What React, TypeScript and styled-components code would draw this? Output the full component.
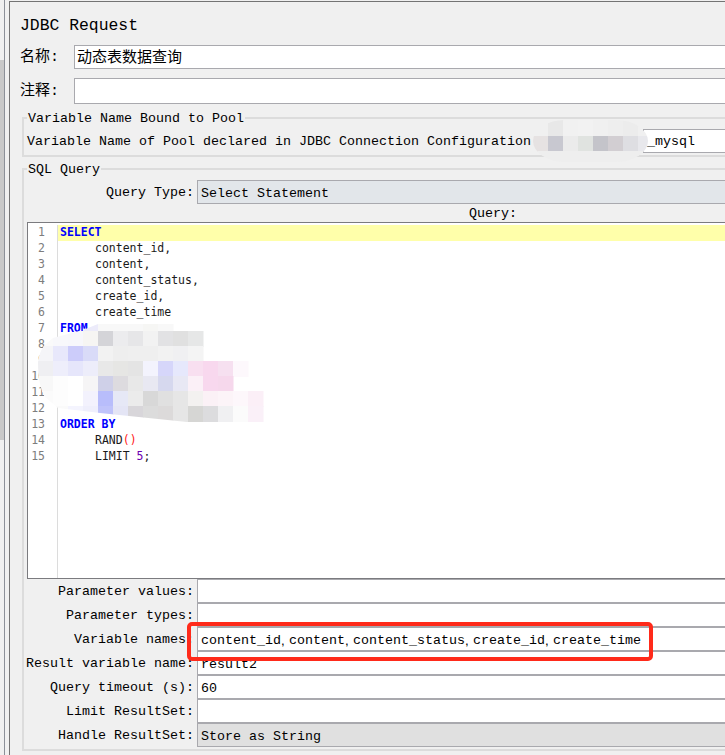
import styled, { createGlobalStyle } from 'styled-components';

const GlobalStyle = createGlobalStyle`
	html, body {
		margin: 0;
		padding: 0;
		background: #f0f0f0;
	}
`;

const Screen = styled.div`
	position: relative;
	display: flex;
	width: 725px;
	height: 755px;
	overflow: hidden;
	background: #f0f0f0;
	color: #000;
	font-family: 'Liberation Mono', 'Noto Sans CJK SC', monospace;
	font-size: 13.33px;
`;

const TreeEdge = styled.div`
	flex: none;
	width: 4px;
	padding: 60px 0 315px;
	box-sizing: border-box;
`;

const TreeThumb = styled.div`
	height: 100%;
	background: #c9c9c9;
`;

const Divider = styled.div`
	flex: none;
	width: 5px;
	border-left: 1px solid #8c9098;
	box-sizing: border-box;
`;

const Panel = styled.div`
	flex: none;
	width: 790px;
	margin-top: 1px;
	padding: 0 0 0 10px;
	box-sizing: border-box;
	border-left: 1px solid #747474;
	border-top: 1px solid #747474;
`;

const Title = styled.h1`
	margin: 0;
	height: 43px;
	padding-top: 14px;
	box-sizing: border-box;
	font-family: 'Liberation Mono', monospace;
	font-size: 16.4px;
	font-weight: 400;
	line-height: 20px;
`;

const NameRow = styled.div<{ $height: number; $gap: number }>`
	display: flex;
	align-items: center;
	height: ${(p) => p.$height}px;
	margin-bottom: ${(p) => p.$gap}px;
`;

const NameLabel = styled.div`
	flex: none;
	width: 54px;
	padding-top: 2px;
	box-sizing: border-box;
	font-family: 'Liberation Mono', 'Noto Sans CJK SC', monospace;
	font-size: 15px;
	line-height: 20px;
`;

const Field = styled.div<{ $bg?: string }>`
	flex: 1;
	display: flex;
	align-items: center;
	height: 100%;
	min-width: 0;
	padding-left: 3px;
	box-sizing: border-box;
	background: ${(p) => p.$bg ?? '#fff'};
	border: 1px solid #a9a9ae;
	border-right: 0;
	white-space: pre;
`;

const RowField = styled(Field)`
	padding-top: 2px;
`;

const CnValue = styled.span`
	margin-left: -1px;
	padding-bottom: 3px;
	font-family: 'Noto Sans CJK SC', sans-serif;
	font-size: 15px;
`;

const Group = styled.fieldset<{ $height: number; $gap: number }>`
	position: relative;
	height: ${(p) => p.$height}px;
	margin: 0 0 ${(p) => p.$gap}px 2px;
	padding: 0 0 0 3px;
	box-sizing: border-box;
	border: 0;
	border-top: 2px solid #dcdcdc;
	border-left: 2px solid #dcdcdc;
	border-bottom: 2px solid #dcdcdc;
	min-width: 0;
`;

const GroupLegend = styled.div`
	position: absolute;
	top: -8px;
	left: 3px;
	padding: 0 1px;
	background: #f0f0f0;
	line-height: 16px;
`;

const PoolRow = styled.div`
	display: flex;
	align-items: center;
	height: 24px;
	margin-top: 10px;
`;

const PoolLabel = styled.div`
	flex: none;
	width: 616px;
`;

const FormRow = styled.div<{ $first?: boolean }>`
	display: flex;
	align-items: stretch;
	height: 24px;
	margin-top: ${(p) => (p.$first ? 10 : 0)}px;
`;

const RowLabel = styled.div`
	flex: none;
	display: flex;
	justify-content: flex-end;
	width: 170px;
	padding: 1px 3px 0 0;
	box-sizing: border-box;
	white-space: pre;
	line-height: 24px;
`;

const QueryHeading = styled.div`
	height: 18px;
	padding-left: 442px;
	line-height: 20px;
`;

const Editor = styled.div`
	display: flex;
	height: 357px;
	padding-top: 2px;
	box-sizing: border-box;
	background: #fff;
	border: 1px solid #7b7b7f;
	border-right: 0;
	font-family: 'DejaVu Sans Mono', monospace;
	font-size: 11.5px;
	line-height: 15px;
`;

const Gutter = styled.div`
	flex: none;
	width: 30px;
	padding-right: 12px;
	box-sizing: border-box;
	text-align: right;
	color: #7d7d7d;
	border-right: 1px solid #dcdcdc;
`;

const GutterLine = styled.div`
	height: 16px;
`;

const Code = styled.div`
	flex: 1;
	min-width: 0;
`;

const CodeLine = styled.div<{ $active?: boolean; $indent?: boolean }>`
	height: 16px;
	padding-left: ${(p) => (p.$indent ? 37 : 2)}px;
	background: ${(p) => (p.$active ? '#ffffaa' : 'transparent')};
	white-space: pre;
	color: #1a1a1a;
`;

const Keyword = styled.span`
	color: #0000ff;
	font-weight: 700;
`;

const Paren = styled.span`
	color: #ff2020;
`;

const NumberToken = styled.span`
	color: #6a00b0;
`;

// comma and the following space are narrower than the mono text around them
const Sep = styled.span`
	font-family: 'Liberation Sans', sans-serif;
	letter-spacing: 0.3px;
`;

const Highlight = styled.div`
	position: absolute;
	left: 187px;
	top: 622px;
	width: 466px;
	height: 39px;
	box-sizing: border-box;
	border: 4px solid #ff2a1a;
	border-radius: 5px;
`;

const Mosaic = styled.svg<{ $left: number; $top: number }>`
	position: absolute;
	left: ${(p) => p.$left}px;
	top: ${(p) => p.$top}px;
`;

const codeBlurRows: [number, number, string[]][] = [
	[316, 83, ['#ecebfa', '#f8f8f8', '#f8f8f8', '#f8f8f8', '#f6f6f4', '#f8f8f8']],
	[331, 38, ['#fafafa', '#f8f8fb', '#f7f7fb', '#f6f5f3', '#d4d4d8', '#ececee', '#e6e6e8', '#f2f2f2', '#e2e2e4', '#e0e0e0', '#e6e7e7']],
	[346, 38, ['#f5f5f8', '#e8e8fb', '#ccccfa', '#d9dbf8', '#f2f2f2', '#eeeeee', '#efefef', '#efefef', '#f2f2f2', '#f0f0f2', '#f4f4f4']],
	[361, 38, ['#efeff2', '#eeeefb', '#e6e6fb', '#ededfa', '#e8e8e8', '#e6e6e4', '#e4e4e4', '#f3f3fd', '#d6d6fa', '#e6e8fc', '#f8dff0', '#f8d8ee', '#f6e0f0', '#fdf8fc']],
	[376, 38, ['#f8f8f8', '#fdfdfd', '#ffffff', '#f6f5f6', '#cfd0e8', '#dddbdf', '#e8e8e8', '#e8e8f2', '#d6d8ee', '#e8e8f4', '#fbf0f7', '#f8d8ee', '#f6d8ec']],
	[391, 38, ['#fbfbfb', '#fdfdfd', '#ffffff', '#f3f2fd', '#b8bdfb', '#e6e8f6', '#ebebeb', '#d8d8d8', '#e0e0e0', '#e6e6e6', '#f3f1f0', '#fbf1f6', '#fcf4f8', '#fdf7fb', '#fbeff7']],
	[406, 53, ['#fafafa', '#f4f4fe', '#efeffc', '#bfc3fa', '#e4e5f5', '#d8d6da', '#dcdcdc', '#dcdada', '#e6e6e6', '#d6d6d4', '#dcdcde', '#f0f0f2', '#fbfbfb', '#faf0f8']],
];

const poolBlurRows: [number, number, string[]][] = [
	[120, 533, ['#f0f0f0', '#e8e8e8', '#f1f1f1', '#f2f2f2', '#f0f0f0', '#eeeeee', '#ececec', '#f0f0f0']],
	[136, 533, ['#e6e2e2', '#c8c8d0', '#ebebeb', '#e0e3e0', '#c4c4ca', '#d2ced2', '#dedee2', '#e8e8ec']],
	[151, 533, ['#eeeeee', '#eeeeee', '#eeeeee', '#eeeeee', '#eeeeee', '#eeeeee', '#eeeeee', '#eeeeee']],
];

const BlurCells = ({
	rows,
	originX,
	originY,
}: {
	rows: [number, number, string[]][];
	originX: number;
	originY: number;
}) => (
	<>
		{rows.flatMap(([y, x, colors]) =>
			colors.map((c, i) => (
				<rect key={`${y}-${i}`} x={x - originX + i * 15} y={y - originY} width={15.5} height={16} fill={c} />
			)),
		)}
	</>
);

const lineNumbers = Array.from({ length: 15 }, (_, i) => i + 1);

const App = () => {
	return (
		<Screen>
			<GlobalStyle />
			<TreeEdge>
				<TreeThumb />
			</TreeEdge>
			<Divider />
			<Panel>
				<Title>JDBC Request</Title>
				<NameRow $height={24} $gap={9}>
					<NameLabel>名称:</NameLabel>
					<Field>
						<CnValue>动态表数据查询</CnValue>
					</Field>
				</NameRow>
				<NameRow $height={26} $gap={13}>
					<NameLabel>注释:</NameLabel>
					<Field />
				</NameRow>
				<Group $height={40} $gap={11}>
					<GroupLegend>Variable Name Bound to Pool</GroupLegend>
					<PoolRow>
						<PoolLabel>Variable Name of Pool declared in JDBC Connection Configuration</PoolLabel>
						<Field>_mysql</Field>
					</PoolRow>
				</Group>
				<Group $height={583} $gap={0}>
					<GroupLegend>SQL Query</GroupLegend>
					<FormRow $first>
						<RowLabel>Query Type:</RowLabel>
						<RowField $bg="#e2e6ea">Select Statement</RowField>
					</FormRow>
					<QueryHeading>Query:</QueryHeading>
					<Editor>
						<Gutter>
							{lineNumbers.map((n) => (
								<GutterLine key={n}>{n}</GutterLine>
							))}
						</Gutter>
						<Code>
							<CodeLine $active>
								<Keyword>SELECT</Keyword>
							</CodeLine>
							<CodeLine $indent>content_id,</CodeLine>
							<CodeLine $indent>content,</CodeLine>
							<CodeLine $indent>content_status,</CodeLine>
							<CodeLine $indent>create_id,</CodeLine>
							<CodeLine $indent>create_time</CodeLine>
							<CodeLine>
								<Keyword>FROM</Keyword>
							</CodeLine>
							<CodeLine />
							<CodeLine />
							<CodeLine />
							<CodeLine />
							<CodeLine />
							<CodeLine>
								<Keyword>ORDER BY</Keyword>
							</CodeLine>
							<CodeLine $indent>
								RAND<Paren>()</Paren>
							</CodeLine>
							<CodeLine $indent>
								LIMIT <NumberToken>5</NumberToken>;
							</CodeLine>
						</Code>
					</Editor>
					<FormRow>
						<RowLabel>Parameter values:</RowLabel>
						<RowField />
					</FormRow>
					<FormRow>
						<RowLabel>Parameter types:</RowLabel>
						<RowField />
					</FormRow>
					<FormRow>
						<RowLabel>Variable names:</RowLabel>
						<RowField>
							content_id<Sep>, </Sep>content<Sep>, </Sep>content_status<Sep>, </Sep>create_id<Sep>, </Sep>create_time
						</RowField>
					</FormRow>
					<FormRow>
						<RowLabel>Result variable name:</RowLabel>
						<RowField>result2</RowField>
					</FormRow>
					<FormRow>
						<RowLabel>Query timeout (s):</RowLabel>
						<RowField>60</RowField>
					</FormRow>
					<FormRow>
						<RowLabel>Limit ResultSet:</RowLabel>
						<RowField />
					</FormRow>
					<FormRow>
						<RowLabel>Handle ResultSet:</RowLabel>
						<RowField $bg="#e0e0e0">Store as String</RowField>
					</FormRow>
				</Group>
			</Panel>
			<Mosaic $left={533} $top={120} width={120} height={42}>
				<defs>
					<clipPath id="pool-blob">
						<rect x={0} y={0} width={115} height={42} rx={32} ry={21} />
					</clipPath>
				</defs>
				<g clipPath="url(#pool-blob)">
					<BlurCells rows={poolBlurRows} originX={533} originY={120} />
				</g>
			</Mosaic>
			<Mosaic $left={38} $top={324} width={226} height={98}>
				<defs>
					<clipPath id="code-blob">
						<path d="M60 0 L226 0 L226 98 L149 98 L62 89 L20 84 L7 73 Q0 62 0 38 Q2 24 9 19 L15 14 L45 6 Z" />
					</clipPath>
				</defs>
				<g clipPath="url(#code-blob)">
					<g transform="translate(0 -8)">
						<BlurCells rows={codeBlurRows} originX={38} originY={316} />
					</g>
				</g>
			</Mosaic>
			<Highlight />
		</Screen>
	);
};

export default App;
